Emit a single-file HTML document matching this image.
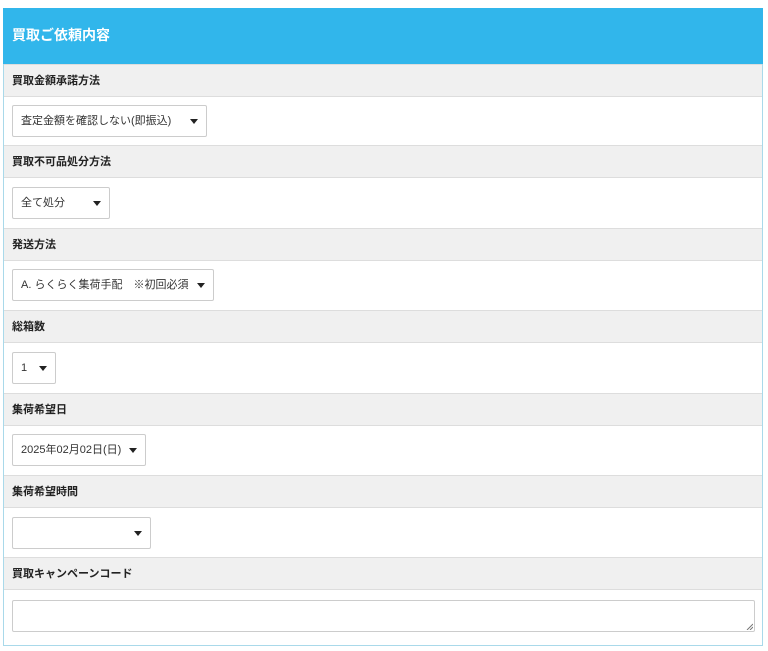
<!DOCTYPE html>
<html><head><meta charset="utf-8"><style>
*{box-sizing:border-box;margin:0;padding:0}
body{width:768px;height:651px;background:#fff;font-family:"Liberation Sans","Noto Sans CJK JP",sans-serif;position:relative;overflow:hidden}
.box{position:absolute;left:3px;top:8px;width:760px;height:638px;border:1px solid #a9d9ea;border-top:none}
.hd{position:absolute;left:3px;top:8px;width:760px;height:56px;background:#31b6eb;color:#fff;font-weight:bold;font-size:14px;padding:0 9px;line-height:54px}
.lb{position:absolute;left:4px;width:758px;height:33px;background:#f0f0f0;border-top:1px solid #ddd;border-bottom:1px solid #ddd;font-size:11px;font-weight:bold;color:#222;padding-left:8px;line-height:32px}
.sel{position:absolute;left:12px;height:32px;border:1px solid #ccc;border-radius:2px;background:#fff;font-size:11px;color:#333;padding-left:8px;line-height:30px}
.sel::after{content:"";position:absolute;right:8px;top:13px;border-left:4px solid transparent;border-right:4px solid transparent;border-top:5px solid #222}
.ta{position:absolute;left:12px;top:600px;width:743px;height:32px;border:1px solid #ccc;border-radius:2px}
.ta svg{position:absolute;right:1px;bottom:1px}
</style></head><body>
<div class="box"></div>
<div class="hd">買取ご依頼内容</div>
<div class="lb" style="top:64px">買取金額承諾方法</div>
<div class="sel" style="top:105px;width:195px">査定金額を確認しない(即振込)</div>
<div class="lb" style="top:145px">買取不可品処分方法</div>
<div class="sel" style="top:187px;width:98px">全て処分</div>
<div class="lb" style="top:228px">発送方法</div>
<div class="sel" style="top:269px;width:202px">A. らくらく集荷手配　※初回必須</div>
<div class="lb" style="top:310px">総箱数</div>
<div class="sel" style="top:352px;width:44px">1</div>
<div class="lb" style="top:393px">集荷希望日</div>
<div class="sel" style="top:434px;width:134px">2025年02月02日(日)</div>
<div class="lb" style="top:475px">集荷希望時間</div>
<div class="sel" style="top:517px;width:139px"></div>
<div class="lb" style="top:557px">買取キャンペーンコード</div>
<div class="ta"><svg width="7" height="7" viewBox="0 0 7 7"><path d="M1 7L7 1M4 7L7 4" stroke="#777" stroke-width="1"/></svg></div>
</body></html>
